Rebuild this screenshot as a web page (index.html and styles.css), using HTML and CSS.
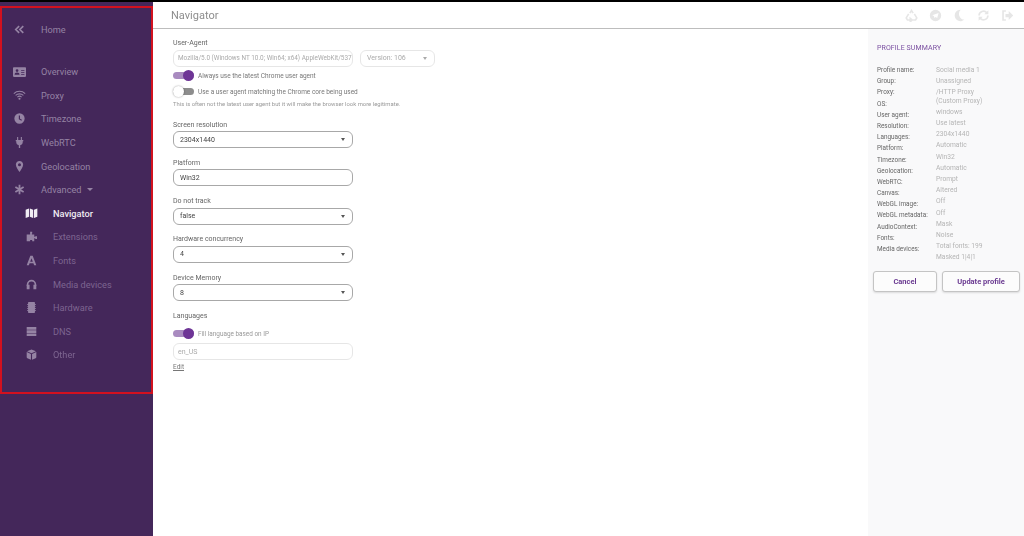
FILE: index.html
```html
<!DOCTYPE html>
<html lang="en">
<head>
<meta charset="utf-8">
<title>Navigator</title>
<link rel="stylesheet" href="styles.css">
</head>
<body>
<div class="topline"></div>
<div class="app">
  <aside class="sidebar">
    <nav class="nav">
      <a class="row home"><svg class="ic" viewBox="0 0 16 16"><path d="M7.500 3 2.500 8l5 5M13.500 3l-5 5 5 5" fill="none" stroke="currentColor" stroke-width="2.400"/></svg><span>Home</span></a>
      <a class="row"><svg class="ic wide" viewBox="0 0 16 12"><path fill-rule="evenodd" d="M1 0h14a1 1 0 0 1 1 1v10a1 1 0 0 1-1 1H1a1 1 0 0 1-1-1V1a1 1 0 0 1 1-1zm4 2.500a1.700 1.700 0 1 0 0 3.400 1.700 1.700 0 0 0 0-3.400zM2 9.500h6c0-2-1-2.800-3-2.800s-3 .8-3 2.800zM10 3.500v1h4v-1zm0 2.500v1h4V6zm0 2.500v1h4v-1z" fill="currentColor"/></svg><span>Overview</span></a>
      <a class="row"><svg class="ic wide" viewBox="0 0 16 12"><path d="M1 4.200a10 10 0 0 1 14 0M3.200 6.500a7 7 0 0 1 9.600 0M5.400 8.600a3.800 3.800 0 0 1 5.200 0" fill="none" stroke="currentColor" stroke-width="1.300"/><circle cx="8" cy="10.600" r="1.300" fill="currentColor"/></svg><span>Proxy</span></a>
      <a class="row"><svg class="ic" viewBox="0 0 16 16"><path fill-rule="evenodd" d="M8 .5a7.500 7.500 0 1 1 0 15 7.500 7.500 0 0 1 0-15zM7 3.500V9l3.800 2.200.8-1.300L8.700 8.200V3.500z" fill="currentColor"/></svg><span>Timezone</span></a>
      <a class="row"><svg class="ic" viewBox="0 0 16 16"><path d="M4.500 0h1.600v4.500h3.800V0h1.600v4.500h2v1.800h-.8v1.500c0 2.300-1.500 3.800-3.700 4.300V16H7v-3.900C4.800 11.600 3.300 10 3.300 7.800V6.300h-.8V4.500h2z" fill="currentColor"/></svg><span>WebRTC</span></a>
      <a class="row"><svg class="ic" viewBox="0 0 16 16"><path fill-rule="evenodd" d="M8 0c3 0 5.300 2.300 5.300 5.200C13.300 8.800 9.800 13.500 8 16 6.200 13.500 2.700 8.800 2.700 5.200 2.700 2.300 5 0 8 0zm0 3.200a2.200 2.200 0 1 0 0 4.400 2.200 2.200 0 0 0 0-4.400z" fill="currentColor"/></svg><span>Geolocation</span></a>
      <a class="row"><svg class="ic" viewBox="0 0 16 16"><path d="M8 1v14M2 4.500l12 7M14 4.500l-12 7" stroke="currentColor" stroke-width="2.600" fill="none"/></svg><span>Advanced</span><i class="caret nav-caret"></i></a>
      <a class="row sub active"><svg class="ic wide" viewBox="0 0 14 12"><path d="M0 2 4 .5V10.500L0 12zM5 .5l4 1.500V12L5 10.500zM10 2l4-1.500V10.500L10 12z" fill="currentColor"/></svg><span>Navigator</span></a>
      <a class="row sub"><svg class="ic" viewBox="0 0 16 16"><path d="M6 1h3v2.500h-.5V5H12v3.500h1.500V7.500H16v4h-2.500v-1H12V15H9v-2H6v2H1V5h5z" fill="currentColor"/></svg><span>Extensions</span></a>
      <a class="row sub"><svg class="ic" viewBox="0 0 16 16"><path fill-rule="evenodd" d="M6.300 1h3.400L15 15h-3.200l-1-2.900H5.200l-1 2.900H1zM8 4.600 6.100 9.700h3.800z" fill="currentColor"/></svg><span>Fonts</span></a>
      <a class="row sub"><svg class="ic" viewBox="0 0 16 16"><path d="M2.300 10V8a5.700 5.700 0 0 1 11.400 0v2" fill="none" stroke="currentColor" stroke-width="2.400"/><path d="M1 8.500h4.200v6.500H1zM10.800 8.500H15v6.500h-4.200z" fill="currentColor"/></svg><span>Media devices</span></a>
      <a class="row sub"><svg class="ic" viewBox="0 0 16 16"><path d="M4 0h8a1 1 0 0 1 1 1v14a1 1 0 0 1-1 1H4a1 1 0 0 1-1-1V1a1 1 0 0 1 1-1zM1.500 3H3v1H1.500zm0 3H3v1H1.500zm0 3H3v1H1.500zm0 3H3v1H1.500zM13 3h1.500v1H13zm0 3h1.500v1H13zm0 3h1.500v1H13zm0 3h1.500v1H13z" fill="currentColor"/></svg><span>Hardware</span></a>
      <a class="row sub"><svg class="ic" viewBox="0 0 16 16"><path d="M1 1.500h14v3.800H1zM1 6.200h14V10H1zM1 10.900h14v3.800H1z" fill="currentColor"/></svg><span>DNS</span></a>
      <a class="row sub"><svg class="ic" viewBox="0 0 16 16"><path d="M8 .8 14.500 3.300 8 6 1.500 3.300zM1 4.500 7.200 7.200V15.500L2 13.300a1.500 1.500 0 0 1-1-1.400zM15 4.500 8.800 7.200V15.500L14 13.300a1.500 1.500 0 0 0 1-1.400z" fill="currentColor"/></svg><span>Other</span></a>
    </nav>
  </aside>

  <div class="main">
    <header class="header">
      <h1>Navigator</h1>
      <div class="tools">
        <svg viewBox="0 0 16 16"><path d="M6 5 8 1.800 10 5M11.500 6l3 5-1.500 2.500H10M4.500 6l-3 5L3 13.500h3.500M6.500 11.500 9 13.500l-2.500 2z" fill="none" stroke="currentColor" stroke-width="2"/></svg>
        <svg viewBox="0 0 16 16"><path fill-rule="evenodd" d="M8 1a7 7 0 1 1 0 14A7 7 0 0 1 8 1zm3.800 4L4 7.800l2 .8.800 2.600 1.300-1.400 2 1.400z" fill="currentColor"/></svg>
        <svg viewBox="0 0 16 16"><path d="M9.500 1a7 7 0 1 0 4.500 12A7 7 0 0 1 9.500 1z" fill="currentColor"/></svg>
        <svg viewBox="0 0 16 16"><path d="M2.500 8A5.500 5.500 0 0 1 12 4.500M13.500 8A5.500 5.500 0 0 1 4 11.500" fill="none" stroke="currentColor" stroke-width="2"/><path d="M14 1.500v5h-5zM2 14.500v-5h5z" fill="currentColor"/></svg>
        <svg viewBox="0 0 16 16"><path d="M6 2.500H2.500v11H6" fill="none" stroke="currentColor" stroke-width="2"/><path d="M5.500 6h4V2.500L15 8l-5.500 5.500V10h-4z" fill="currentColor"/></svg>
      </div>
    </header>

    <div class="content">
      <form class="form">
        <label class="lbl">User-Agent</label>
        <div class="ua-row">
          <div class="field ghost ua"><span>Mozilla/5.0 (Windows NT 10.0; Win64; x64) AppleWebKit/537</span></div>
          <div class="field ghost version"><span>Version: 106</span><i class="caret"></i></div>
        </div>
        <div class="toggle-row t1"><span class="switch on"></span><span>Always use the latest Chrome user agent</span></div>
        <div class="toggle-row t2"><span class="switch off"></span><span>Use a user agent matching the Chrome core being used</span></div>
        <p class="hint">This is often not the latest user agent but it will make the browser look more legitimate.</p>

        <label class="lbl gap-a">Screen resolution</label>
        <div class="field"><span>2304x1440</span><i class="caret"></i></div>
        <label class="lbl gap-b">Platform</label>
        <div class="field"><span>Win32</span></div>
        <label class="lbl gap-b">Do not track</label>
        <div class="field"><span>false</span><i class="caret"></i></div>
        <label class="lbl gap-b">Hardware concurrency</label>
        <div class="field"><span>4</span><i class="caret"></i></div>
        <label class="lbl gap-b">Device Memory</label>
        <div class="field"><span>8</span><i class="caret"></i></div>
        <label class="lbl gap-b">Languages</label>
        <div class="toggle-row t3"><span class="switch on"></span><span>Fill language based on IP</span></div>
        <div class="field ghost"><span>en_US</span></div>
        <a class="edit">Edit</a>
      </form>

      <aside class="summary">
        <h2>PROFILE SUMMARY</h2>
        <div class="cols">
          <ul class="labels">
            <li>Profile name:</li><li>Group:</li><li>Proxy:</li><li>OS:</li><li>User agent:</li><li>Resolution:</li><li>Languages:</li><li>Platform:</li><li>Timezone:</li><li>Geolocation:</li><li>WebRTC:</li><li>Canvas:</li><li>WebGL image:</li><li>WebGL metadata:</li><li>AudioContext:</li><li>Fonts:</li><li>Media devices:</li>
          </ul>
          <ul class="values">
            <li>Social media 1</li><li>Unassigned</li><li class="double">/HTTP Proxy<br>(Custom Proxy)</li><li>windows</li><li>Use latest</li><li>2304x1440</li><li>Automatic</li><li>Win32</li><li>Automatic</li><li>Prompt</li><li>Altered</li><li>Off</li><li>Off</li><li>Mask</li><li>Noise</li><li>Total fonts: 199</li><li>Masked 1|4|1</li>
          </ul>
        </div>
        <div class="actions">
          <button type="button" class="btn cancel">Cancel</button>
          <button type="button" class="btn update">Update profile</button>
        </div>
      </aside>
    </div>
  </div>
</div>
</body>
</html>
```

FILE: styles.css
```css
* { box-sizing: border-box; }
html, body { margin: 0; padding: 0; height: 100%; overflow: hidden; }
body { font-family: Roboto, "Liberation Sans", sans-serif; background: #fff; display: flex; flex-direction: column; }

.topline { height: 2px; background: #000; flex: none; }
.app { flex: 1; display: flex; min-height: 0; filter: blur(.3px); }

.sidebar { width: 153px; flex: none; background: #44275a; padding-top: 4px; }
.nav { height: 387.500px; border: 2px solid #d2111f; padding-top: 10px; display: flex; flex-direction: column; }
.row { height: 23.600px; flex: none; display: flex; align-items: center; padding-left: 12px; font-size: 9.200px; color: #9583a4; }
.row .ic { width: 11px; height: 11px; flex: none; margin-right: 16px; }
.row .ic.wide { width: 13px; height: 10px; margin-left: -1px; margin-right: 15px; }
.home { margin-bottom: 18.400px; }
.sub { padding-left: 24px; color: #7d6590; }
.sub .ic { color: #9583a4; }
.active { color: #f0ecf3; font-weight: 500; }
.active .ic { color: #f0ecf3; }

.caret { display: block; width: 0; height: 0; border-left: 2.500px solid transparent; border-right: 2.500px solid transparent; border-top: 3px solid #555; }
.nav-caret { margin-left: 5px; border-left-width: 3.500px; border-right-width: 3.500px; border-top: 3.500px solid #9583a4; }

.main { flex: 1; min-width: 0; display: flex; flex-direction: column; }
.header { height: 27px; flex: none; border-bottom: 1px solid #bdbdbd; display: flex; align-items: center; justify-content: space-between; padding: 0 10px 0 18px; }
.header h1 { margin: 0; font-size: 11px; font-weight: 400; color: #8d8d8d; }
.tools { display: flex; gap: 11px; color: #e6e6e6; }
.tools svg { width: 13px; height: 13px; display: block; }

.content { flex: 1; display: flex; min-height: 0; }
.form { width: 715px; flex: none; padding: 10px 0 0 20px; display: flex; flex-direction: column; align-items: flex-start; }

.lbl { display: block; font-size: 7px; line-height: 9px; color: #666; margin-bottom: 1.500px; }
.gap-a { margin-top: 13px; }
.gap-b { margin-top: 10.800px; }

.field { width: 180px; height: 17px; flex: none; border: 1px solid #a8a8a8; border-radius: 6px; display: flex; align-items: center; justify-content: space-between; padding: 0 7px 0 6px; font-size: 7px; color: #444; background: #fff; }
.field.ghost { border-color: #e6e6e6; color: #aaa; padding-left: 4px; }
.ua-row { display: flex; gap: 7px; }
.ua { font-size: 6.400px; white-space: nowrap; overflow: hidden; padding-right: 0; }
.field.version { width: 75px; padding-left: 6px; }
.version .caret { border-top-color: #aaa; }

.toggle-row { display: flex; align-items: center; font-size: 6.500px; color: #777; height: 12px; }
.toggle-row > span:last-child { margin-left: 4px; }
.t1 { margin-top: 3px; }
.t2 { margin-top: 4px; }
.t3 { margin-top: 5.500px; margin-bottom: 3.500px; }
.t3 > span:last-child { color: #999; font-size: 6.400px; }

.switch { position: relative; display: block; width: 21px; height: 7px; border-radius: 4px; flex: none; background: #a98bc0; }
.switch::after { content: ""; position: absolute; top: -2px; width: 11px; height: 11px; border-radius: 50%; }
.switch.on::after { right: 0; background: #6e3596; }
.switch.off { background: #8d8d8d; }
.switch.off::after { left: 0; background: #fff; box-shadow: 0 0 2px rgba(0,0,0,.4); }

.hint { margin: 2px 0 0; font-size: 5.900px; line-height: 8px; color: #999; }

.edit { font-size: 6.500px; color: #777; text-decoration: underline; margin-top: 3px; }

.summary { flex: 1; min-width: 0; background: #f9f9fa; padding: 15px 4px 0 9px; }
.summary h2 { margin: 0; font-size: 7px; font-weight: 400; line-height: 9px; color: #7a4ea0; letter-spacing: .1px; }
.cols { display: flex; margin-top: 12px; }
ul { list-style: none; margin: 0; padding: 0; }
.labels { width: 59px; flex: none; color: #666; font-size: 6.400px; }
.labels li { height: 11.200px; line-height: 11.200px; white-space: nowrap; }
.values { color: #b5b5b5; font-size: 6.700px; }
.values li { height: 11.200px; line-height: 11.200px; white-space: nowrap; }
.values li.double { height: 19.500px; line-height: 8.500px; padding-top: 1px; }
.actions { display: flex; gap: 5px; margin: 7px 0 0 -4px; }
.btn { height: 21px; border: 1px solid #c4c4c4; border-radius: 3px; background: #fcfcfc; color: #6a3a91; font-family: inherit; font-size: 7.500px; font-weight: 700; padding: 0; box-shadow: 0 1px 2px rgba(0,0,0,.12); }
.cancel { width: 64px; }
.update { width: 78px; }
```
